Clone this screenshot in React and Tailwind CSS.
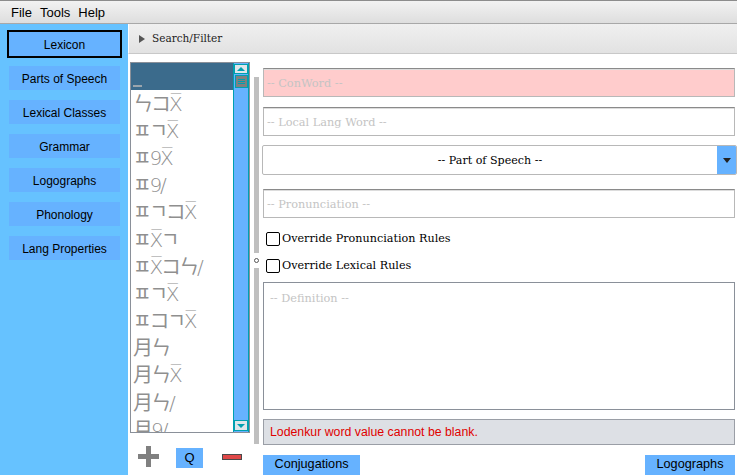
import React from 'react';

const SANS = { fontFamily: '"Liberation Sans", sans-serif' };

const navItems = ['Parts of Speech', 'Lexical Classes', 'Grammar', 'Logographs', 'Phonology', 'Lang Properties'];

// Lodenkur script has no font here, so rows use look-alike characters
const words = [
  'ㄣコX̅',
  'ㅍㄱX̅',
  'ㅍ9X̅',
  'ㅍ9/',
  'ㅍㄱコX̅',
  'ㅍX̅ㄱ',
  'ㅍX̅コㄣ/',
  'ㅍㄱX̅',
  'ㅍコㄱX̅',
  '月ㄣ',
  '月ㄣX̅',
  '月ㄣ/',
  '月9/',
];

const TextField = ({ label, className = '' }) => (
  <div className={`h-[29px] flex items-center pl-[3px] pt-[3px] border border-[#b8b8b8] border-t-[#8a8a8a] shadow-[inset_0_1px_0_#dcdcdc] text-[11.3px] text-[#c4c4c4] ${className}`}>
    {label}
  </div>
);

const CheckRow = ({ label, className = '' }) => (
  <label className={`flex items-center h-[16px] ml-[3px] text-[11.2px] text-black ${className}`}>
    <span className="w-[14px] h-[14px] bg-white border border-black rounded-[2px] mr-[2px]" />
    {label}
  </label>
);

const App = () => {
  return (
    <div className="w-[737px] h-[475px] overflow-hidden flex flex-col bg-white" style={{ fontFamily: '"DejaVu Serif", serif' }}>
      {/* Menu bar */}
      <div className="h-6 shrink-0 flex items-center gap-2 pl-[11px] pt-px text-[13px] text-black bg-gradient-to-b from-[#f2f2f2] to-[#dedede] border-t border-t-[#8c8c8c] border-b border-b-[#a8a8a8]" style={SANS}>
        <span>File</span>
        <span>Tools</span>
        <span>Help</span>
      </div>

      <div className="flex-1 flex min-h-0">
        {/* Sidebar */}
        <div className="w-[128px] shrink-0 bg-[#66c2ff] pt-[6px] px-[7px] flex flex-col text-[12px] text-black" style={SANS}>
          <div className="h-[28px] w-[115px] mb-2 pt-px flex items-center justify-center bg-[#66b2ff] border-2 border-black">Lexicon</div>
          <div className="flex flex-col gap-[10px] mx-[2px] w-[111px]">
            {navItems.map(item => (
              <div key={item} className="h-6 pt-px flex items-center justify-center bg-[#66b2ff]">{item}</div>
            ))}
          </div>
        </div>

        <div className="flex-1 flex flex-col min-w-0">
          {/* Search/Filter header */}
          <div className="h-[30px] shrink-0 flex items-center pl-[10px] gap-[7px] bg-gradient-to-b from-[#f0f0f0] to-[#e2e2e2] border-b border-[#c8c8c8] border-l border-l-white text-[10.5px] text-[#222]">
            <span className="w-0 h-0 border-y-[4px] border-y-transparent border-l-[6px] border-l-[#555]" />
            <span>Search/Filter</span>
          </div>

          <div className="flex-1 flex min-h-0">
            {/* Word list */}
            <div className="w-[120px] ml-[2px] shrink-0 pt-2 flex flex-col">
              <div className="h-[371px] shrink-0 flex border border-[#8a9099] overflow-hidden">
                <div className="flex-1 min-w-0 overflow-hidden">
                  <div className="h-[27px] bg-[#3b6b8c] flex items-end pl-[2px] pb-[3px]">
                    <span className="w-[9px] h-[2px] bg-[#9aa5ad]" />
                  </div>
                  {words.map((word, i) => (
                    <div key={i} className="h-[27.2px] flex items-center pl-[2px] text-[20px] leading-none tracking-[-2px] text-[#8f8f8f] whitespace-nowrap" style={{ fontFamily: '"DejaVu Sans Light", "DejaVu Sans", "Noto Sans CJK KR", sans-serif' }}>
                      {word}
                    </div>
                  ))}
                </div>
                {/* Scrollbar */}
                <div className="w-[16px] shrink-0 flex flex-col items-center bg-[#66b2ff] border-x border-[#00a0b0] pt-px">
                  <div className="w-[14px] h-[10px] flex items-center justify-center bg-[#dfe6ea] border border-[#00a0b0]">
                    <span className="w-0 h-0 border-x-[4px] border-x-transparent border-b-[4px] border-b-[#00a0b0]" />
                  </div>
                  <div className="w-[13px] h-[13px] mt-px flex flex-col justify-center gap-px px-[2px] bg-[#808080] border border-[#00a0b0]">
                    <span className="h-px bg-[#00a0b0]" />
                    <span className="h-px bg-[#00a0b0]" />
                    <span className="h-px bg-[#00a0b0]" />
                  </div>
                  <div className="flex-1" />
                  <div className="w-[14px] h-[11px] mb-px flex items-center justify-center bg-[#dfe6ea] border border-[#00a0b0]">
                    <span className="w-0 h-0 border-x-[4px] border-x-transparent border-t-[4px] border-t-[#00a0b0]" />
                  </div>
                </div>
              </div>

              {/* Add / query / delete */}
              <div className="flex items-center mt-3 pl-2 h-[22px]">
                <svg width="21" height="21" viewBox="0 0 21 21" className="shrink-0">
                  <path d="M8 0h5v8h8v5h-8v8H8v-8H0V8h8z" fill="#808080" />
                </svg>
                <div className="w-[27px] h-[20px] ml-[17px] mt-[3px] flex items-center justify-center bg-[#66b2ff] text-[13px] text-black" style={SANS}>Q</div>
                <span className="w-[20px] h-[6px] ml-[19px] mt-[1px] bg-[#e04848] border border-[#4a4a4a]" />
              </div>
            </div>

            {/* Divider */}
            <div className="w-[5px] ml-[4px] shrink-0 pt-[23px] flex flex-col items-center">
              <span className="w-[5px] h-[176px] bg-[#bfbfbf]" />
              <span className="w-[5px] h-[5px] my-[5px] rounded-full border border-[#555]" />
              <span className="w-[5px] h-[176px] bg-[#bfbfbf]" />
            </div>

            {/* Form */}
            <div className="flex-1 min-w-0 ml-[4px] mr-[2px] pt-[14px] flex flex-col">
              <TextField label="-- ConWord --" className="bg-[#ffcccc]" />
              <TextField label="-- Local Lang Word --" className="mt-[10px]" />
              <div className="h-[30px] mt-[9px] -ml-px -mr-[2px] flex border border-[#b8b8b8] rounded-[2px] overflow-hidden">
                <div className="flex-1 flex items-center justify-center pt-[3px] text-[11.1px] text-black">-- Part of Speech --</div>
                <div className="w-[19px] flex items-center justify-center bg-[#66b2ff]">
                  <span className="w-0 h-0 border-x-[4px] border-x-transparent border-t-[5px] border-t-[#222]" />
                </div>
              </div>
              <TextField label="-- Pronunciation --" className="mt-[14px]" />
              <CheckRow label="Override Pronunciation Rules" className="mt-[13px]" />
              <CheckRow label="Override Lexical Rules" className="mt-[11px]" />
              <div className="h-[128px] mt-[8px] pl-[6px] pt-[8px] border border-[#8a9099] text-[11.3px] text-[#c4c4c4]">-- Definition --</div>
              <div className="h-[26px] mt-[9px] pl-[6px] flex items-center bg-[#dde0e5] border border-[#9a9ea6] text-[12.3px] text-[#e00000]" style={SANS}>
                Lodenkur word value cannot be blank.
              </div>
              <div className="flex justify-between mt-[10px] text-[12.7px] text-black" style={SANS}>
                <div className="w-[97px] h-[20px] flex items-center justify-center bg-[#66b2ff]">Conjugations</div>
                <div className="w-[90px] h-[20px] flex items-center justify-center bg-[#66b2ff]">Logographs</div>
              </div>
            </div>
          </div>
        </div>
      </div>
    </div>
  );
};

export default App;
